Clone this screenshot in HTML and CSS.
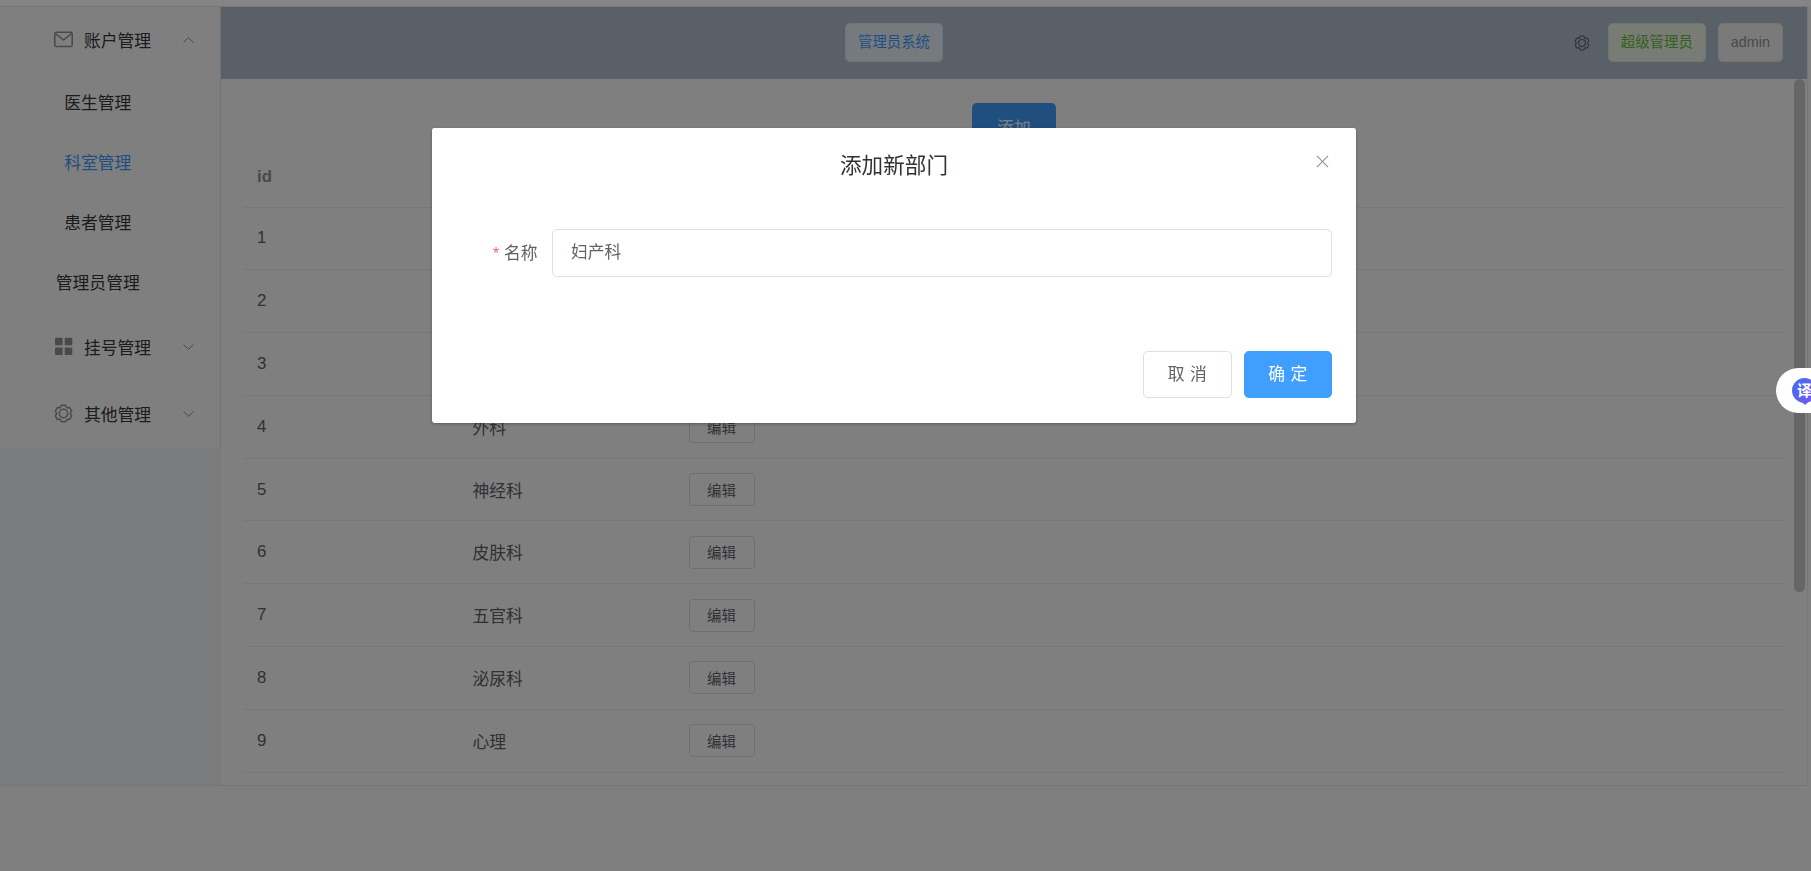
FILE: index.html
```html
<!DOCTYPE html>
<html lang="zh">
<head>
<meta charset="utf-8">
<title>管理员系统</title>
<link rel="stylesheet" href="styles.css">
</head>
<body>
<div class="strip"></div>
<div class="shell">
  <aside class="aside">
    <nav class="menu">
      <div class="menu-title">
        <svg class="menu-icon" viewBox="0 0 19 16"><rect x="0.8" y="0.8" width="17.4" height="14.2" rx="1.6" fill="none" stroke="#909399" stroke-width="1.5"/><path d="M1.5 2.2 9.5 8.6 17.5 2.2" fill="none" stroke="#909399" stroke-width="1.5"/></svg>
        <span>账户管理</span>
        <svg class="arrow" viewBox="0 0 11 6"><path d="M0.5 5.5 5.5 0.7 10.5 5.5" fill="none" stroke="#909399" stroke-width="1"/></svg>
      </div>
      <a class="menu-item">医生管理</a>
      <a class="menu-item active">科室管理</a>
      <a class="menu-item">患者管理</a>
      <a class="menu-item">管理员管理</a>
      <div class="menu-title">
        <svg class="menu-icon" viewBox="0 0 19 18"><rect x="1" y="0.2" width="7.6" height="7.6" rx="1" fill="#909399"/><rect x="10.7" y="0.2" width="7.6" height="7.6" rx="1" fill="#909399"/><rect x="1" y="10" width="7.6" height="7.6" rx="1" fill="#909399"/><rect x="10.7" y="10" width="7.6" height="7.6" rx="1" fill="#909399"/></svg>
        <span>挂号管理</span>
        <svg class="arrow" viewBox="0 0 11 6"><path d="M0.5 0.5 5.5 5.3 10.5 0.5" fill="none" stroke="#909399" stroke-width="1"/></svg>
      </div>
      <div class="menu-title">
        <svg class="menu-icon" viewBox="0 0 20 20"><path d="M7.82 1.27 12.18 1.27 13.5 3.94 16.47 3.75 18.65 7.52 17 10 18.65 12.48 16.47 16.25 13.5 16.06 12.18 18.73 7.82 18.73 6.5 16.06 3.53 16.25 1.35 12.48 3 10 1.35 7.52 3.53 3.75 6.5 3.94Z" fill="none" stroke="#909399" stroke-width="1.5" stroke-linejoin="round"/><circle cx="10" cy="10" r="4.4" fill="none" stroke="#909399" stroke-width="1.5"/></svg>
        <span>其他管理</span>
        <svg class="arrow" viewBox="0 0 11 6"><path d="M0.5 0.5 5.5 5.3 10.5 0.5" fill="none" stroke="#909399" stroke-width="1"/></svg>
      </div>
    </nav>
  </aside>
  <div class="main-col">
    <header class="top">
      <span class="tag tag-blue title-tag">管理员系统</span>
      <div class="top-right">
        <svg class="gear" viewBox="0 0 20 20"><path d="M7.82 1.27 12.18 1.27 13.5 3.94 16.47 3.75 18.65 7.52 17 10 18.65 12.48 16.47 16.25 13.5 16.06 12.18 18.73 7.82 18.73 6.5 16.06 3.53 16.25 1.35 12.48 3 10 1.35 7.52 3.53 3.75 6.5 3.94Z" fill="none" stroke="#606266" stroke-width="1.4" stroke-linejoin="round"/><circle cx="10" cy="10" r="4.4" fill="none" stroke="#606266" stroke-width="1.4"/></svg>
        <span class="tag tag-green">超级管理员</span>
        <span class="tag tag-gray">admin</span>
      </div>
    </header>
    <div class="body-row">
      <main class="content">
        <div class="actions"><button class="btn-add">添加</button></div>
        <div class="table">
          <div class="row head"><div>id</div><div>名称</div><div>操作</div></div>
          <div class="row"><div>1</div><div>内科</div><div><button class="btn-edit">编辑</button></div></div>
          <div class="row"><div>2</div><div>儿科</div><div><button class="btn-edit">编辑</button></div></div>
          <div class="row"><div>3</div><div>骨科</div><div><button class="btn-edit">编辑</button></div></div>
          <div class="row"><div>4</div><div>外科</div><div><button class="btn-edit">编辑</button></div></div>
          <div class="row"><div>5</div><div>神经科</div><div><button class="btn-edit">编辑</button></div></div>
          <div class="row"><div>6</div><div>皮肤科</div><div><button class="btn-edit">编辑</button></div></div>
          <div class="row"><div>7</div><div>五官科</div><div><button class="btn-edit">编辑</button></div></div>
          <div class="row"><div>8</div><div>泌尿科</div><div><button class="btn-edit">编辑</button></div></div>
          <div class="row"><div>9</div><div>心理</div><div><button class="btn-edit">编辑</button></div></div>
        </div>
      </main>
      <div class="scrollbar"><div class="thumb"></div></div>
    </div>
  </div>
</div>

<div class="modal"></div>

<section class="dialog">
  <div class="dialog-head">
    <h2 class="dialog-title">添加新部门</h2>
    <svg class="close" viewBox="0 0 14 14"><path d="M1 1 13 13M13 1 1 13" fill="none" stroke="#909399" stroke-width="1.2"/></svg>
  </div>
  <div class="dialog-body">
    <label class="field-label"><span class="star">*</span>名称</label>
    <div class="input">妇产科</div>
  </div>
  <div class="dialog-foot">
    <button class="btn btn-plain">取 消</button>
    <button class="btn btn-primary">确 定</button>
  </div>
</section>

<div class="translate">
  <div class="bubble">译</div>
</div>
</body>
</html>
```

FILE: styles.css
```css
* { box-sizing: border-box; }

html, body {
  margin: 0;
  height: 100%;
  overflow: hidden;
  background: #fff;
  font-family: "Liberation Sans", "Noto Sans CJK SC", sans-serif;
  font-size: 16.8px;
  color: #606266;
}

.strip {
  position: relative;
  z-index: 2;
  height: 6px;
  background: #848484;
}

.shell {
  display: flex;
  width: 1808px;
  height: 779.6px;
  border: 1px solid #ececec;
  border-left: 0;
  overflow: hidden;
}

/* sidebar */
.aside {
  width: 221px;
  flex: none;
  background: #f4f6fa;
}

.menu {
  background: #fff;
  border-right: 1px solid #e6e6e6;
  height: 441px;
  color: #37383b;
}

.menu-title {
  display: flex;
  align-items: center;
  height: 67.2px;
  padding: 0 26px 2px 54px;
}

.menu-icon {
  width: 19px;
  height: 19px;
  margin-right: 11px;
  flex: none;
}

.arrow {
  width: 11px;
  height: 6px;
  margin-left: auto;
  flex: none;
}

.menu-item {
  display: block;
  height: 60px;
  line-height: 60px;
  padding-right: 24.5px;
  text-align: center;
}

.menu-item.active { color: #409eff; }

/* top bar */
.main-col {
  flex: 1;
  display: flex;
  flex-direction: column;
  min-width: 0;
}

.top {
  display: flex;
  align-items: center;
  flex: none;
  height: 72px;
  padding: 0 24px 1px 624px;
  background: #b3c0d1;
}

.top-right {
  display: flex;
  align-items: center;
  gap: 12px;
  margin-left: auto;
}

.gear {
  width: 16px;
  height: 16px;
  margin-right: 6px;
}

.tag {
  display: inline-block;
  height: 39px;
  line-height: 37px;
  padding: 0 12px;
  border: 1px solid;
  border-radius: 4.8px;
  font-size: 14.4px;
  white-space: nowrap;
}

.tag-blue { background: #ecf5ff; border-color: #d9ecff; color: #409eff; }
.tag-green { background: #f0f9eb; border-color: #e1f3d8; color: #67c23a; }
.tag-gray { background: #f4f4f5; border-color: #e9e9eb; color: #909399; }

/* content */
.body-row {
  flex: 1;
  display: flex;
  min-height: 0;
}

.content {
  flex: 1;
  min-width: 0;
  padding: 24px 10px 0 23px;
  overflow: hidden;
}

.actions {
  height: 44.5px;
  text-align: center;
}

.btn-add {
  width: 84px;
  height: 48px;
  border: 0;
  border-radius: 4.8px;
  background: #409eff;
  color: #fff;
  font: inherit;
}

.row {
  display: grid;
  grid-template-columns: 215.5px 216px 1fr;
  align-items: center;
  height: 62.8px;
  padding-left: 13px;
  border-bottom: 1px solid #ebeef5;
}

.row.head {
  height: 60px;
  color: #909399;
  font-weight: 700;
}

.btn-edit {
  display: block;
  width: 66px;
  height: 33px;
  padding: 0 0 1px;
  border: 1px solid #dcdfe6;
  border-radius: 3.6px;
  background: #fff;
  color: #606266;
  font: inherit;
  font-size: 14.4px;
}

.scrollbar {
  width: 13px;
  flex: none;
}

.thumb {
  width: 11px;
  height: 513px;
  border-radius: 6px;
  background: #cccccc;
}

/* modal */
.modal {
  position: fixed;
  inset: 0;
  z-index: 1;
  background: rgba(0, 0, 0, .5);
}

.dialog {
  position: fixed;
  z-index: 3;
  left: 432px;
  top: 128px;
  width: 924px;
  background: #fff;
  border-radius: 2.4px;
  box-shadow: 0 1px 3px rgba(0, 0, 0, .3);
}

.dialog-head {
  position: relative;
  height: 64px;
  padding-top: 23px;
  text-align: center;
}

.dialog-title {
  margin: 0;
  font-size: 21.6px;
  font-weight: 400;
  line-height: 29px;
  color: #303133;
}

.close {
  position: absolute;
  top: 27px;
  right: 27px;
  width: 13px;
  height: 13px;
}

.dialog-body {
  display: flex;
  align-items: center;
  padding: 37px 24px 74px;
}

.field-label {
  flex: none;
  width: 96px;
  padding: 0 14.4px 2px 0;
  text-align: right;
}

.star {
  margin-right: 4.8px;
  color: #f56c6c;
}

.input {
  flex: 1;
  height: 47.5px;
  line-height: 45.5px;
  padding: 0 18px;
  border: 1px solid #dcdfe6;
  border-radius: 4.8px;
}

.dialog-foot {
  display: flex;
  justify-content: flex-end;
  gap: 12px;
  padding: 0 24px 24.5px;
}

.btn {
  width: 89px;
  height: 47.5px;
  padding: 0 0 2px;
  border: 1px solid #dcdfe6;
  border-radius: 4.8px;
  background: #fff;
  color: #606266;
  font: inherit;
  letter-spacing: .5px;
}

.btn-primary {
  width: 88px;
  border-color: #409eff;
  background: #409eff;
  color: #fff;
}

/* translate widget */
.translate {
  position: fixed;
  z-index: 3;
  right: 0;
  top: 368px;
  width: 35px;
  height: 45px;
  border-radius: 23px 0 0 23px;
  background: #fff;
  overflow: hidden;
}

.bubble {
  position: absolute;
  left: 16px;
  top: 10px;
  width: 25px;
  height: 25px;
  border-radius: 50%;
  background: linear-gradient(135deg, #3f6ff0, #7a55f0);
  color: #fff;
  font-size: 15px;
  font-weight: 700;
  line-height: 25px;
  text-align: center;
}

.bubble::after {
  content: "";
  position: absolute;
  left: 10px;
  bottom: -2px;
  border: 3px solid transparent;
  border-bottom: 0;
  border-top-color: #5a62f0;
}
```
